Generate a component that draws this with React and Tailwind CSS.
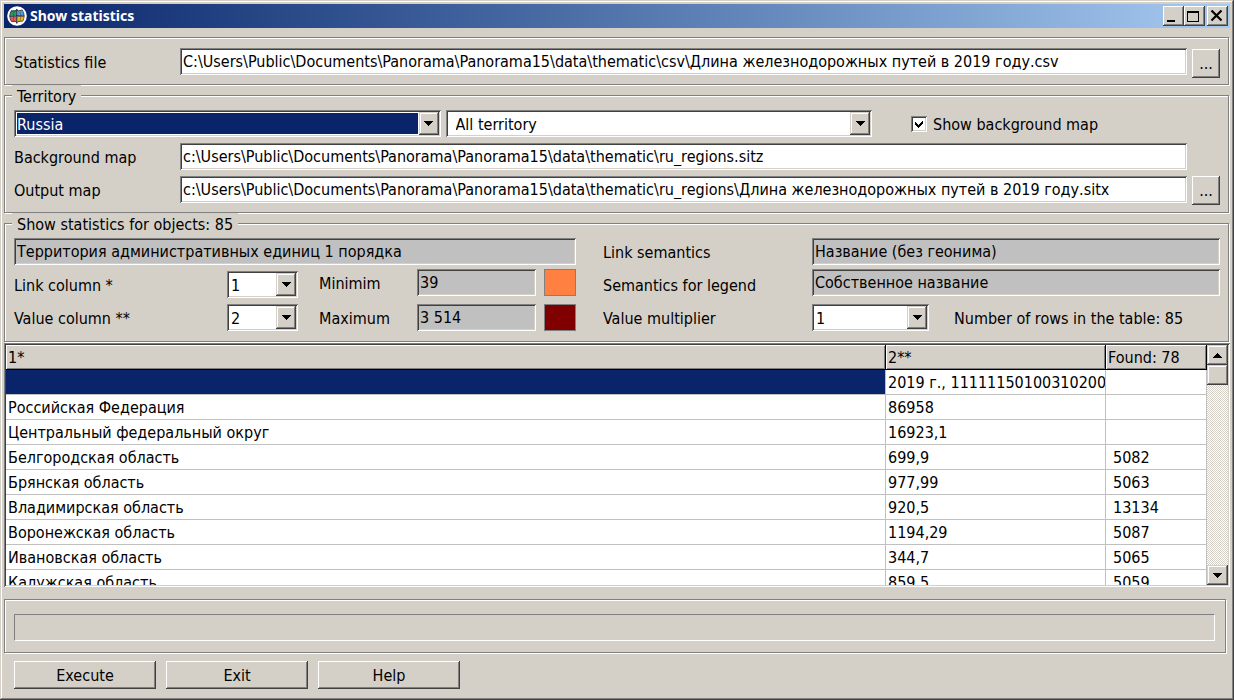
import React from "react";

const SUNKEN =
  "shadow-[inset_1px_1px_0_#808080,inset_-1px_-1px_0_#fff,inset_2px_2px_0_#404040,inset_-2px_-2px_0_#d4d0c8]";
const RAISED =
  "bg-[#d4d0c8] shadow-[inset_-1px_-1px_0_#404040,inset_1px_1px_0_#fff,inset_-2px_-2px_0_#808080]";
const RAISED_SOFT =
  "bg-[#d4d0c8] shadow-[inset_-1px_-1px_0_#404040,inset_1px_1px_0_#d4d0c8,inset_-2px_-2px_0_#808080,inset_2px_2px_0_#fff]";
const ETCHED =
  "mr-px border border-[#808080] shadow-[1px_1px_0_#fff,inset_1px_1px_0_#fff]";

function Arrow({ up }) {
  return (
    <svg width="9" height="5" viewBox="0 0 9 5" shapeRendering="crispEdges" aria-hidden="true">
      <path d={up ? "M4 0h1v1h1v1h1v1h1v1h1v1H0V4h1V3h1V2h1V1h1z" : "M0 0h9v1H8v1H7v1H6v1H5v1H4V4H3V3H2V2H1V1H0z"} />
    </svg>
  );
}

function TextBox({ id, value, readOnly, label, className = "" }) {
  return (
    <input
      id={id}
      type="text"
      aria-label={label}
      defaultValue={value}
      readOnly={readOnly}
      className={`h-[27px] min-w-0 px-[3px] outline-none ${readOnly ? "bg-[#c0c0c0]" : "bg-white"} ${SUNKEN} ${className}`}
    />
  );
}

function Combo({ id, options, label, selected, indent = "pl-[3px]", className = "" }) {
  return (
    <div className={`relative h-[27px] bg-white p-[2px] ${SUNKEN} ${className}`}>
      <select
        id={id}
        aria-label={label}
        className={`block h-[23px] w-full appearance-none border border-r-[21px] border-white pt-[2px] outline-none ${
          selected ? "bg-[#0a246a] text-white" : indent
        }`}
      >
        {options.map((o) => (
          <option key={o}>{o}</option>
        ))}
      </select>
      <span
        className={`pointer-events-none absolute inset-y-[2px] right-[2px] flex w-5 items-center justify-center ${RAISED_SOFT}`}
      >
        <Arrow />
      </span>
    </div>
  );
}

function BrowseButton({ label, className = "" }) {
  return (
    <button type="button" aria-label={label} className={`h-[29px] w-7 shrink-0 ${RAISED} ${className}`}>
      ...
    </button>
  );
}

function Label({ htmlFor, className, children }) {
  return (
    <label htmlFor={htmlFor} className={`shrink-0 pt-[2px] ${className}`}>
      {children}
    </label>
  );
}

function Group({ title, className, children }) {
  return (
    <fieldset className={`min-w-0 px-[7px] ${ETCHED} ${className}`}>
      <legend className="bg-[#d4d0c8] px-[5px] pt-[3px] leading-[17px]">{title}</legend>
      <div className="pl-[2px] pr-px pt-[5px]">{children}</div>
    </fieldset>
  );
}

function AppIcon() {
  return (
    <svg width="20" height="20" viewBox="0 0 20 20" aria-hidden="true">
      <circle cx="10" cy="10" r="9.8" fill="#fff" />
      <path d="M4.500 4.500 9 4v5.500H2.800C3 7.500 3.500 6 4.500 4.500z" fill="#2a9a62" />
      <path d="M10.500 5 14.500 4C16 5.500 16.800 7 17 9l-6.500 1z" fill="#4a9be0" />
      <path d="M3 10.500h6V16l-4.500-.500C3.500 14 3 12.500 3 10.500z" fill="#e05a58" />
      <path d="M10.500 10.500 16.800 10c0 2-.6 3.500-1.600 5l-4.700 1z" fill="#f0b418" />
      <path d="M9.800 3v14.500M2.500 10.200l14.800-.4" fill="none" stroke="#2b2b38" strokeWidth="1.300" />
      <path d="M4.500 5.200 8.600 5l1.200-1.200L11 5l4.200-1M4.500 15.400l4 .2 1.300 1.200 1.200-1.200 4.400-.6" fill="none" stroke="#2b2b38" strokeWidth="0.8" />
      <path d="M4.600 4.300C2.300 8 2.300 12 4.500 15.700M15 3.800c2.600 3.500 2.700 8 .5 11.700" fill="none" stroke="#2b2b38" strokeWidth="0.8" />
      <path d="M6.800 6c-.5 2-.5 6 0 8.500M13.200 6c.6 2 .6 6 0 8.500" fill="none" stroke="#2b2b38" strokeWidth="0.4" />
    </svg>
  );
}

function TitleBar() {
  return (
    <header className="flex h-6 items-center bg-linear-to-r from-[#0a246a] to-[#a6caf0] pl-[3px] pr-[2px]">
      <AppIcon />
      <h1 className="ml-[3px] flex-1 font-['Noto_Sans',sans-serif] text-[14px] font-bold text-white">Show statistics</h1>
      <button type="button" aria-label="Minimize" className={`h-5 w-[21px] ${RAISED}`}>
        <svg width="21" height="20" shapeRendering="crispEdges" aria-hidden="true">
          <path d="M4 14h8v2H4z" />
        </svg>
      </button>
      <button type="button" aria-label="Maximize" className={`h-5 w-[21px] ${RAISED}`}>
        <svg width="21" height="20" shapeRendering="crispEdges" aria-hidden="true">
          <path fillRule="evenodd" d="M3 5h12v11H3zM4 7v8h10V7z" />
        </svg>
      </button>
      <button type="button" aria-label="Close" className={`ml-[2px] h-5 w-[21px] ${RAISED}`}>
        <svg width="21" height="20" aria-hidden="true">
          <path d="M4.500 4.500l10 10M14.500 4.500l-10 10" stroke="#000" strokeWidth="2.200" />
        </svg>
      </button>
    </header>
  );
}

const ROWS = [
  ["", "2019 г., 111111501003102000", ""],
  ["Российская Федерация", "86958", ""],
  ["Центральный федеральный округ", "16923,1", ""],
  ["Белгородская область", "699,9", "5082"],
  ["Брянская область", "977,99", "5063"],
  ["Владимирская область", "920,5", "13134"],
  ["Воронежская область", "1194,29", "5087"],
  ["Ивановская область", "344,7", "5065"],
  ["Калужская область", "859,5", "5059"],
];

const TH =
  "h-[25px] overflow-hidden border-r border-b border-black pl-[2px] pt-[2px] text-left font-normal shadow-[inset_1px_1px_0_#fff,inset_-1px_-1px_0_#808080]";
const TD = "h-[25px] overflow-hidden border-r border-b border-[#c0c0c0] pt-[2px] whitespace-nowrap";

function StatsTable() {
  return (
    <section className={`mt-px flex min-h-0 flex-1 overflow-hidden bg-white p-[2px] ${SUNKEN}`}>
      <div className="min-w-0 flex-1 overflow-hidden">
        <table className="w-full table-fixed border-separate border-spacing-0">
          <colgroup>
            <col />
            <col className="w-[220px]" />
            <col className="w-[101px]" />
          </colgroup>
          <thead className="bg-[#d4d0c8]">
            <tr>
              <th className={TH}>1*</th>
              <th className={TH}>2**</th>
              <th className={TH}>Found: 78</th>
            </tr>
          </thead>
          <tbody>
            {ROWS.map((r, i) => (
              <tr key={i}>
                <td className={`${TD} pl-[2px] ${i === 0 ? "bg-[#0a246a]" : ""}`}>{r[0]}</td>
                <td className={`${TD} pl-[2px]`}>{r[1]}</td>
                <td className={`${TD} pl-[7px]`}>{r[2]}</td>
              </tr>
            ))}
          </tbody>
        </table>
      </div>
      <div className="flex w-[21px] shrink-0 flex-col bg-[repeating-conic-gradient(#fff_0_25%,#d4d0c8_0_50%)] bg-[length:2px_2px]">
        <button type="button" aria-label="Scroll up" className={`flex h-5 items-center justify-center ${RAISED_SOFT}`}>
          <Arrow up />
        </button>
        <div className={`h-5 ${RAISED_SOFT}`} />
        <button type="button" aria-label="Scroll down" className={`mt-auto flex h-5 items-center justify-center ${RAISED_SOFT}`}>
          <Arrow />
        </button>
      </div>
    </section>
  );
}

export default function App() {
  return (
    <div className="flex h-screen flex-col bg-[#d4d0c8] p-1 font-['DejaVu_Sans_Condensed','Noto_Sans',sans-serif] text-[16px] leading-5 text-black shadow-[inset_-1px_-1px_0_#404040,inset_1px_1px_0_#d4d0c8,inset_-2px_-2px_0_#808080,inset_2px_2px_0_#fff]">
      <TitleBar />

      <div className={`mt-[9px] flex gap-[5px] pt-[10px] pr-2 pb-[6px] pl-[9px] ${ETCHED}`}>
        <div className="flex flex-1 items-center self-start">
          <Label htmlFor="stat-file" className="w-[166px]">Statistics file</Label>
          <TextBox
            id="stat-file"
            className="flex-1"
            value={"C:\\Users\\Public\\Documents\\Panorama\\Panorama15\\data\\thematic\\csv\\Длина железнодорожных путей в 2019 году.csv"}
          />
        </div>
        <BrowseButton label="Browse statistics file" className="mt-px" />
      </div>

      <Group title="Territory" className="pb-[7px]">
        <div className="flex">
          <Combo label="Country" options={["Russia"]} selected className="flex-1" />
          <Combo label="Area" options={["All territory"]} indent="pl-[7px]" className="ml-[5px] flex-1" />
          <label className="flex w-[348px] shrink-0 items-center pl-[39px]">
            <span className="relative mr-[6px] flex size-4">
              <input type="checkbox" defaultChecked className={`peer size-4 appearance-none bg-white ${SUNKEN}`} />
              <svg
                className="pointer-events-none absolute inset-0 hidden peer-checked:block"
                width="16"
                height="16"
                shapeRendering="crispEdges"
                aria-hidden="true"
              >
                <path d="M4 6h1v1h1v1h1v1h1V8h1V7h1V6h1V5h1v3h-1v1h-1v1H9v1H8v1H7v-1H6v-1H5V9H4z" />
              </svg>
            </span>
            <span className="pt-[2px]">Show background map</span>
          </label>
        </div>
        <div className="mt-[6px] flex items-center">
          <Label htmlFor="bg-map" className="w-[166px]">Background map</Label>
          <TextBox
            id="bg-map"
            className="mr-[33px] flex-1"
            value={"c:\\Users\\Public\\Documents\\Panorama\\Panorama15\\data\\thematic\\ru_regions.sitz"}
          />
        </div>
        <div className="mt-[6px] flex gap-[5px]">
          <div className="flex flex-1 items-center self-start">
            <Label htmlFor="out-map" className="w-[166px]">Output map</Label>
            <TextBox
              id="out-map"
              className="flex-1"
              value={"c:\\Users\\Public\\Documents\\Panorama\\Panorama15\\data\\thematic\\ru_regions\\Длина железнодорожных путей в 2019 году.sitx"}
            />
          </div>
          <BrowseButton label="Browse output map" />
        </div>
      </Group>

      <Group title="Show statistics for objects: 85" className="pb-[10px]">
        <div className="grid grid-cols-[562fr_617fr] gap-[27px]">
          <div>
            <TextBox label="Objects" readOnly className="block w-full" value="Территория административных единиц 1 порядка" />
            <div className="mt-1 flex gap-[21px]">
              <div className="flex flex-col gap-[6px] pt-[2px]">
                <div className="flex items-center">
                  <Label htmlFor="link-col" className="w-[213px]">Link column *</Label>
                  <Combo id="link-col" options={["1", "2"]} indent="pl-px" className="w-[71px]" />
                </div>
                <div className="flex items-center">
                  <Label htmlFor="value-col" className="w-[213px]">Value column **</Label>
                  <Combo id="value-col" options={["2", "1"]} indent="pl-px" className="w-[71px]" />
                </div>
              </div>
              <div className="flex flex-1 flex-col gap-2">
                <div className="flex items-center">
                  <Label htmlFor="min" className="w-[98px]">Minimim</Label>
                  <TextBox id="min" readOnly className="w-0 flex-1" value="39" />
                  <button type="button" aria-label="Minimum colour" className="ml-2 h-[27px] w-8 border border-[#808080] bg-[#ff8040]" />
                </div>
                <div className="flex items-center">
                  <Label htmlFor="max" className="w-[98px]">Maximum</Label>
                  <TextBox id="max" readOnly className="w-0 flex-1" value="3 514" />
                  <button type="button" aria-label="Maximum colour" className="ml-2 h-[27px] w-8 border border-[#808080] bg-[#800000]" />
                </div>
              </div>
            </div>
          </div>
          <div>
            <div className="flex items-center">
              <Label htmlFor="link-sem" className="w-[209px]">Link semantics</Label>
              <TextBox id="link-sem" readOnly className="flex-1" value="Название (без геонима)" />
            </div>
            <div className="mt-1 flex items-end">
              <Label htmlFor="legend-sem" className="w-[209px]">Semantics for legend</Label>
              <TextBox id="legend-sem" readOnly className="flex-1" value="Собственное название" />
            </div>
            <div className="mt-2 flex items-center">
              <Label htmlFor="mult" className="w-[209px]">Value multiplier</Label>
              <Combo id="mult" options={["1", "10"]} indent="pl-px" className="w-[117px] shrink-0" />
              <span className="ml-[25px] pt-[2px] whitespace-nowrap">Number of rows in the table: 85</span>
            </div>
          </div>
        </div>
      </Group>

      <StatsTable />

      <div className="mt-3 mr-1 border border-[#808080] pt-[14px] pr-[10px] pb-[11px] pl-[9px] shadow-[1px_1px_0_#fff,inset_1px_1px_0_#fff]">
        <div role="progressbar" aria-label="Progress" className="h-[27px] border border-t-[#808080] border-r-white border-b-white border-l-[#808080]" />
      </div>

      <footer className="mt-2 mb-[7px] flex gap-[10px] pl-[10px]">
        {["Execute", "Exit", "Help"].map((t) => (
          <button key={t} type="button" className={`h-7 w-[142px] pt-[2px] ${RAISED}`}>
            {t}
          </button>
        ))}
      </footer>
    </div>
  );
}
